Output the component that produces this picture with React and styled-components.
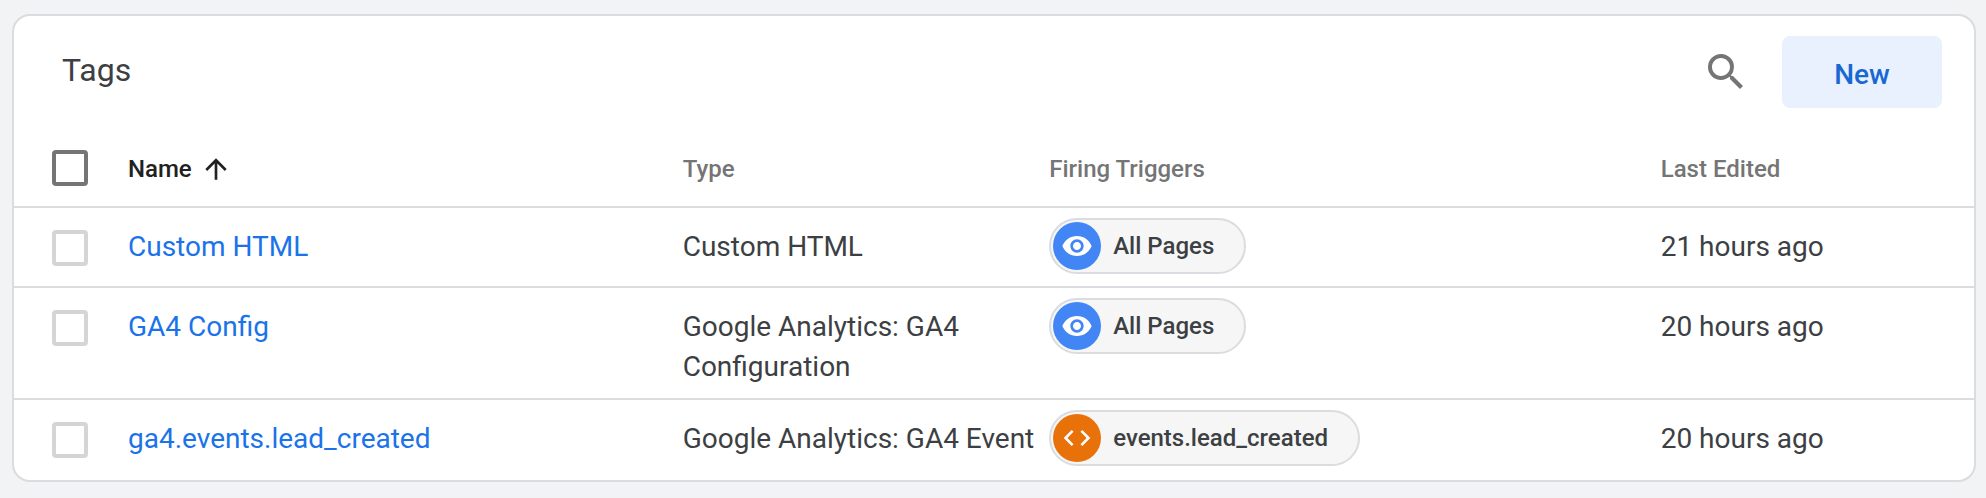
import React, { useState } from 'react'
import styled, { createGlobalStyle } from 'styled-components'

const tags = [
    { name: 'Custom HTML', type: 'Custom HTML', trigger: 'All Pages', kind: 'page', edited: '21 hours ago' },
    { name: 'GA4 Config', type: 'Google Analytics: GA4 Configuration', trigger: 'All Pages', kind: 'page', edited: '20 hours ago' },
    { name: 'ga4.events.lead_created', type: 'Google Analytics: GA4 Event', trigger: 'events.lead_created', kind: 'event', edited: '20 hours ago' },
]

const paths = {
    search: 'M15.5 14h-.79l-.28-.27A6.471 6.471 0 0 0 16 9.5 6.5 6.5 0 1 0 9.5 16c1.61 0 3.09-.59 4.23-1.57l.27.28v.79l5 4.99L20.49 19l-4.99-5zm-6 0C7.01 14 5 11.99 5 9.5S7.01 5 9.5 5 14 7.01 14 9.5 11.99 14 9.5 14z',
    up: 'M4 12l1.41 1.41L11 7.83V20h2V7.83l5.58 5.59L20 12l-8-8-8 8z',
    page: 'M12 4.5C7 4.5 2.73 7.61 1 12c1.73 4.39 6 7.5 11 7.5s9.27-3.11 11-7.5c-1.73-4.39-6-7.5-11-7.5zM12 17c-2.76 0-5-2.24-5-5s2.24-5 5-5 5 2.24 5 5-2.24 5-5 5zm0-8c-1.66 0-3 1.34-3 3s1.34 3 3 3 3-1.34 3-3-1.34-3-3-3z',
    event: 'M9.4 16.6L4.8 12l4.6-4.6L8 6l-6 6 6 6 1.4-1.4zm5.2 0l4.6-4.6-4.6-4.6L16 6l6 6-6 6-1.4-1.4z',
}

const Icon = ({ name, size }) => (
    <svg width={size} height={size} viewBox="0 0 24 24" fill="currentColor" aria-hidden="true">
        <path d={paths[name]} />
    </svg>
)

const App = () => {
    const [selected, setSelected] = useState([])
    const allSelected = selected.length === tags.length

    const toggle = (name) => {
        setSelected(selected.includes(name) ? selected.filter((n) => n !== name) : [...selected, name])
    }

    return (
        <>
            <GlobalStyle />
            <Card>
                <Toolbar>
                    <Title>Tags</Title>
                    <SearchButton type="button" aria-label="Search">
                        <Icon name="search" size={48} />
                    </SearchButton>
                    <NewButton type="button">New</NewButton>
                </Toolbar>
                <Table>
                    <thead>
                        <tr>
                            <HeadCheckCell>
                                <Checkbox
                                    $dark
                                    aria-label="Select all tags"
                                    checked={allSelected}
                                    onChange={() => setSelected(allSelected ? [] : tags.map((t) => t.name))}
                                />
                            </HeadCheckCell>
                            <HeadCell $width="28.3%" aria-sort="ascending">
                                <SortButton type="button">
                                    Name
                                    <Icon name="up" size={32} />
                                </SortButton>
                            </HeadCell>
                            <HeadCell $width="18.7%">Type</HeadCell>
                            <HeadCell $width="31.2%">Firing Triggers</HeadCell>
                            <HeadCell>Last Edited</HeadCell>
                        </tr>
                    </thead>
                    <tbody>
                        {tags.map((tag) => (
                            <Row key={tag.name}>
                                <CheckCell>
                                    <Checkbox
                                        aria-label={`Select ${tag.name}`}
                                        checked={selected.includes(tag.name)}
                                        onChange={() => toggle(tag.name)}
                                    />
                                </CheckCell>
                                <Cell><TagLink href="#">{tag.name}</TagLink></Cell>
                                <Cell>{tag.type}</Cell>
                                <ChipCell>
                                    <Chip href="#">
                                        <ChipIcon $kind={tag.kind}><Icon name={tag.kind} size={32} /></ChipIcon>
                                        {tag.trigger}
                                    </Chip>
                                </ChipCell>
                                <Cell>{tag.edited}</Cell>
                            </Row>
                        ))}
                    </tbody>
                </Table>
            </Card>
        </>
    )
}

export default App

const GlobalStyle = createGlobalStyle`
* {
    box-sizing: border-box;
}
body {
    margin: 0;
    background: #f1f3f4;
    color: #3c4043;
    font-family: Roboto, sans-serif;
    font-size: 28px;
    line-height: 40px;
}
button {
    font-family: inherit;
    border: 0;
    padding: 0;
    cursor: pointer;
}
svg {
    display: block;
}
`;
const Card = styled.section`
margin: 14px 10px 16px 12px;
background: white;
border: 2px solid #dadce0;
border-radius: 18px;
overflow: hidden;
`;
const Toolbar = styled.header`
display: flex;
align-items: center;
padding: 20px 32px 22px 48px;
`;
const Title = styled.h1`
flex: 1;
margin: 0;
padding-bottom: 4px;
font-size: 32px;
font-weight: 400;
`;
const SearchButton = styled.button`
margin-right: 32px;
background: none;
color: #757575;
`;
const NewButton = styled.button`
height: 72px;
min-width: 160px;
padding-top: 4px;
border-radius: 8px;
background: #e8f1fd;
color: #1967d2;
font-size: 28px;
font-weight: 500;
`;
const Table = styled.table`
width: 100%;
table-layout: fixed;
border-collapse: separate;
border-spacing: 0;
`;
const HeadCell = styled.th`
width: ${(p) => p.$width || 'auto'};
height: 78px;
padding: 2px 0 0;
border-bottom: 2px solid #dadce0;
color: #757575;
font-size: 24px;
font-weight: 500;
text-align: left;
vertical-align: middle;
`;
const HeadCheckCell = styled(HeadCell)`
width: 114px;
padding: 0;
`;
const SortButton = styled.button`
display: flex;
align-items: center;
gap: 8px;
background: none;
color: #212121;
font-size: 24px;
font-weight: 500;
`;
const Cell = styled.td`
padding: 19px 0 11px;
border-bottom: 2px solid #dadce0;
vertical-align: top;
`;
const CheckCell = styled(Cell)`
padding-top: 22px;
`;
const ChipCell = styled(Cell)`
padding: 10px 0 12px;
`;
const Row = styled.tr`
&:last-child ${Cell} {
    border-bottom-color: transparent;
}
`;
const Checkbox = styled.input.attrs({ type: 'checkbox' })`
appearance: none;
display: block;
width: 36px;
height: 36px;
margin: 0 0 0 38px;
border: 4px solid ${(p) => (p.$dark ? '#757575' : '#d5d5d5')};
border-radius: 4px;
&:checked {
    background: #1a73e8;
    border-color: #1a73e8;
}
`;
const TagLink = styled.a`
color: #1a73e8;
text-decoration: none;
`;
const Chip = styled.a`
display: flex;
align-items: center;
gap: 12px;
width: fit-content;
height: 56px;
padding: 0 30px 0 2px;
border: 2px solid #dadce0;
border-radius: 28px;
background: #f6f6f6;
color: #3c4043;
font-size: 24px;
font-weight: 500;
text-decoration: none;
`;
const ChipIcon = styled.span`
display: flex;
align-items: center;
justify-content: center;
width: 48px;
height: 48px;
border-radius: 50%;
background: ${(p) => (p.$kind === 'event' ? '#e8710a' : '#4285f4')};
color: white;
`;
